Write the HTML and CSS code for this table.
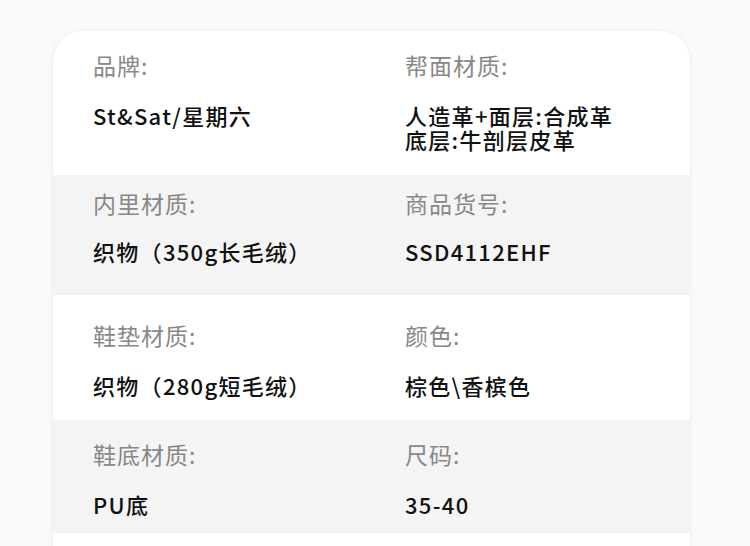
FILE: index.html
```html
<!DOCTYPE html>
<html lang="zh-CN">
<head>
<meta charset="utf-8">
<link rel="stylesheet" href="styles.css">
</head>
<body>
<div class="card">
  <div class="row row-1">
    <div class="cell">
      <div class="label">品牌:</div>
      <div class="value">St&amp;Sat/星期六</div>
    </div>
    <div class="cell">
      <div class="label">帮面材质:</div>
      <div class="value">人造革+面层:合成革<br>底层:牛剖层皮革</div>
    </div>
  </div>
  <div class="row row-2 shaded">
    <div class="cell">
      <div class="label">内里材质:</div>
      <div class="value">织物（350g长毛绒）</div>
    </div>
    <div class="cell">
      <div class="label">商品货号:</div>
      <div class="value">SSD4112EHF</div>
    </div>
  </div>
  <div class="row row-3">
    <div class="cell">
      <div class="label">鞋垫材质:</div>
      <div class="value">织物（280g短毛绒）</div>
    </div>
    <div class="cell">
      <div class="label">颜色:</div>
      <div class="value">棕色\香槟色</div>
    </div>
  </div>
  <div class="row row-4 shaded">
    <div class="cell">
      <div class="label">鞋底材质:</div>
      <div class="value">PU底</div>
    </div>
    <div class="cell">
      <div class="label">尺码:</div>
      <div class="value">35-40</div>
    </div>
  </div>
  <div class="row row-5"></div>
</div>
</body>
</html>
```
FILE: styles.css
```css
html, body {
  margin: 0;
  padding: 0;
}
body {
  background: #fafafa;
  font-family: "Noto Sans CJK SC", "Noto Sans", sans-serif;
  width: 750px;
  height: 546px;
  overflow: hidden;
}
.card {
  margin: 31px 0 0 53px;
  width: 637px;
  background: #ffffff;
  border-radius: 30px 30px 0 0;
  box-shadow: 0 0 5px rgba(0, 0, 0, 0.07);
  overflow: hidden;
}
.row {
  display: grid;
  grid-template-columns: 312px 1fr;
  padding-left: 40px;
  box-sizing: border-box;
}
.shaded {
  background: #f4f4f4;
}
.cell {
  display: flex;
  flex-direction: column;
  gap: 26px;
}
.label {
  font-size: 23px;
  line-height: 24px;
  letter-spacing: 1px;
  color: #888888;
}
.value {
  font-size: 22px;
  line-height: 24px;
  letter-spacing: 1.3px;
  color: #111111;
  font-weight: 500;
}
.row-1 { height: 144px; padding-top: 22px; }
.row-2 { height: 120px; padding-top: 16px; }
.row-2 .cell { gap: 24px; }
.row-3 { height: 125px; padding-top: 28px; }
.row-4 { height: 113px; padding-top: 22px; }
.row-5 { height: 40px; }
```
